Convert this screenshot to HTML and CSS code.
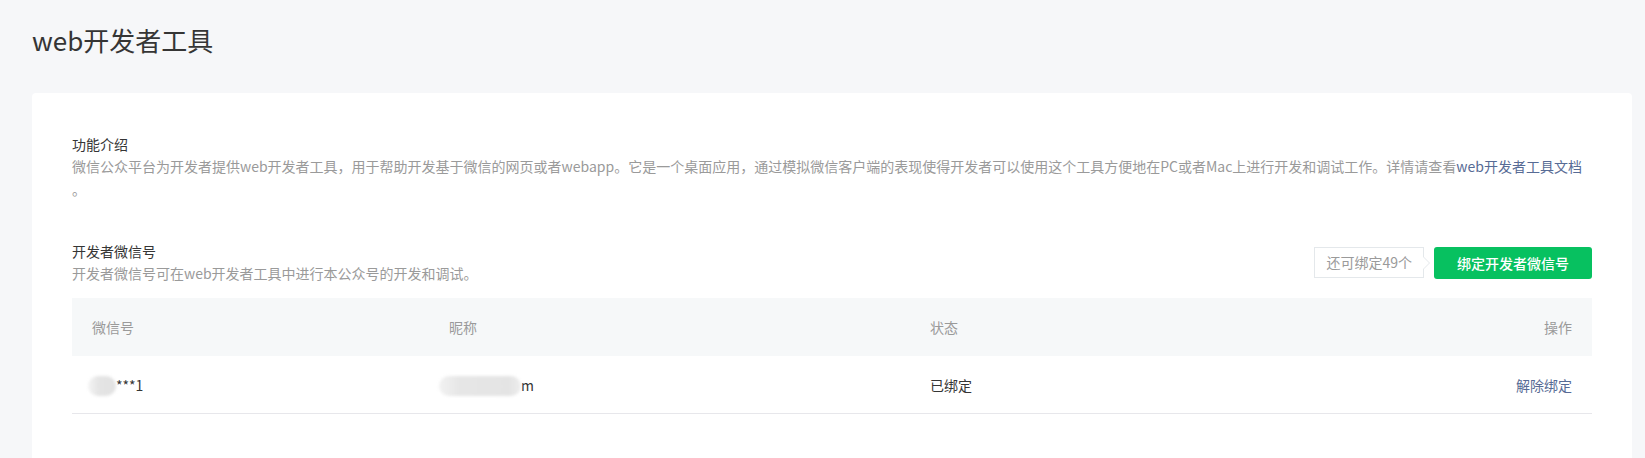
FILE: index.html
```html
<!DOCTYPE html>
<html lang="zh-CN">
<head>
<meta charset="utf-8">
<title>web开发者工具</title>
<link rel="stylesheet" href="styles.css">
</head>
<body>
<div class="page">
  <h1 class="page-title">web开发者工具</h1>
  <div class="card">
    <section class="section">
      <h2 class="section-title">功能介绍</h2>
      <p class="section-desc">微信公众平台为开发者提供web开发者工具，用于帮助开发基于微信的网页或者webapp。它是一个桌面应用，通过模拟微信客户端的表现使得开发者可以使用这个工具方便地在PC或者Mac上进行开发和调试工作。详情请查看<a class="link" href="#">web开发者工具文档</a><br>。</p>
    </section>
    <section class="section section-dev">
      <div class="section-head">
        <div class="section-info">
          <h2 class="section-title">开发者微信号</h2>
          <p class="section-desc">开发者微信号可在web开发者工具中进行本公众号的开发和调试。</p>
        </div>
        <div class="section-actions">
          <span class="tip">还可绑定49个</span>
          <button class="btn-primary" type="button">绑定开发者微信号</button>
        </div>
      </div>
      <table class="dev-table">
        <colgroup>
          <col class="col-id">
          <col class="col-name">
          <col class="col-status">
          <col class="col-op">
        </colgroup>
        <thead>
          <tr>
            <th>微信号</th>
            <th>昵称</th>
            <th>状态</th>
            <th class="cell-op">操作</th>
          </tr>
        </thead>
        <tbody>
          <tr>
            <td><span class="mask mask-id"></span><span class="masked-text">***1</span></td>
            <td><span class="mask mask-name"></span><span class="masked-text">m</span></td>
            <td>已绑定</td>
            <td class="cell-op"><a class="link" href="#">解除绑定</a></td>
          </tr>
        </tbody>
      </table>
    </section>
  </div>
</div>
</body>
</html>
```
FILE: styles.css
```css
html, body {
  margin: 0;
  padding: 0;
  height: 100%;
  overflow: hidden;
}

body {
  background: #f6f7f9;
  font-family: "Noto Sans CJK SC", "Noto Sans", sans-serif;
  font-size: 14px;
  color: #353535;
}

.page {
  padding: 22px 13px 0 32px;
}

.page-title {
  margin: 0;
  font-size: 26px;
  line-height: 36px;
  font-weight: normal;
  color: #353535;
}

.card {
  margin-top: 35px;
  background: #ffffff;
  border-radius: 4px 4px 0 0;
  padding: 40px 40px 44px;
}

.section-title {
  margin: 0;
  font-size: 14px;
  line-height: 22px;
  font-weight: normal;
  color: #353535;
}

.section-desc {
  margin: 0;
  font-size: 14px;
  line-height: 23px;
  color: #9a9a9a;
}

.link {
  color: #576b95;
  text-decoration: none;
}

.section-dev {
  margin-top: 39px;
}

.section-head {
  display: flex;
  align-items: center;
  justify-content: space-between;
}

.section-actions {
  display: flex;
  align-items: center;
  gap: 10px;
}

.tip {
  position: relative;
  box-sizing: border-box;
  height: 31px;
  line-height: 29px;
  padding: 0 11px;
  border: 1px solid #e4e8eb;
  background: #fff;
  color: #9a9a9a;
  font-size: 14px;
}

.tip::before,
.tip::after {
  content: "";
  position: absolute;
  top: 50%;
  width: 0;
  height: 0;
  border-style: solid;
}

.tip::before {
  right: -7px;
  margin-top: -7px;
  border-width: 7px 0 7px 7px;
  border-color: transparent transparent transparent #e4e8eb;
}

.tip::after {
  right: -6px;
  margin-top: -6px;
  border-width: 6px 0 6px 6px;
  border-color: transparent transparent transparent #ffffff;
}

.btn-primary {
  width: 158px;
  height: 32px;
  border: 0;
  border-radius: 3px;
  background: #07c160;
  color: #fff;
  font-family: inherit;
  font-size: 14px;
  font-weight: 500;
  padding: 0;
  cursor: pointer;
}

.dev-table {
  width: 100%;
  margin-top: 13px;
  border-collapse: collapse;
  table-layout: fixed;
}

.col-id { width: 357px; }
.col-name { width: 481px; }
.col-op { width: 200px; }

.dev-table th,
.dev-table td {
  padding: 0 20px;
  text-align: left;
  font-size: 14px;
  white-space: nowrap;
}

.dev-table th {
  height: 58px;
  background: #f6f8f9;
  color: #9a9a9a;
  font-weight: normal;
}

.dev-table td {
  height: 57px;
  border-bottom: 1px solid #e7e7eb;
  color: #353535;
}

.dev-table .cell-op {
  text-align: right;
}

.mask {
  display: inline-block;
  height: 20px;
  vertical-align: middle;
  border-radius: 10px;
  filter: blur(1.5px);
}

.mask-id {
  width: 28px;
  margin-left: -4px;
  background: linear-gradient(to right, #f4f4f4 0%, #e4e4e4 40%, #e2e2e2 100%);
}

.mask-name {
  width: 82px;
  margin-left: -10px;
  background: linear-gradient(to right, #f2f2f2 0%, #e6e6e6 25%, #e4e4e4 85%, #ededed 100%);
}

.masked-text {
  vertical-align: middle;
}
```
